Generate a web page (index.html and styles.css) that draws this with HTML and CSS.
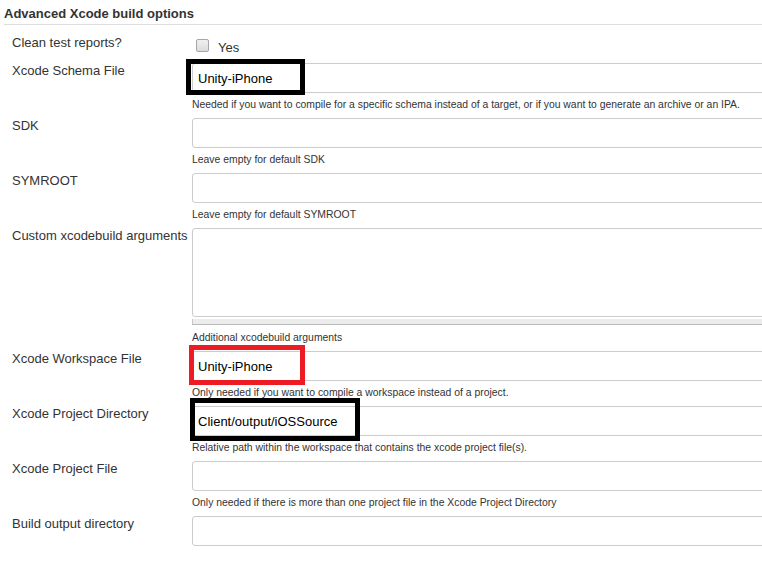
FILE: index.html
```html
<!DOCTYPE html>
<html>
<head>
<meta charset="utf-8">
<title>Advanced Xcode build options</title>
<link rel="stylesheet" href="styles.css">
</head>
<body>
<div class="section">
  <div class="section-header">Advanced Xcode build options</div>
  <div class="rows">
    <div class="row row-check">
      <div class="label">Clean test reports?</div>
      <div class="main check">
        <input type="checkbox" class="cb" id="clean">
        <label class="cb-label" for="clean">Yes</label>
      </div>
    </div>

    <div class="row">
      <div class="label">Xcode Schema File</div>
      <div class="main">
        <div class="field">
          <input class="text" type="text" value="Unity-iPhone">
          <span class="mark mark-black mark-schema"></span>
        </div>
        <div class="desc">Needed if you want to compile for a specific schema instead of a target, or if you want to generate an archive or an IPA.</div>
      </div>
    </div>

    <div class="row">
      <div class="label">SDK</div>
      <div class="main">
        <div class="field"><input class="text" type="text" value=""></div>
        <div class="desc">Leave empty for default SDK</div>
      </div>
    </div>

    <div class="row">
      <div class="label">SYMROOT</div>
      <div class="main">
        <div class="field"><input class="text" type="text" value=""></div>
        <div class="desc">Leave empty for default SYMROOT</div>
      </div>
    </div>

    <div class="row row-area">
      <div class="label">Custom xcodebuild arguments</div>
      <div class="main">
        <textarea class="area"></textarea>
        <div class="handle"></div>
        <div class="desc desc-area">Additional xcodebuild arguments</div>
      </div>
    </div>

    <div class="row">
      <div class="label">Xcode Workspace File</div>
      <div class="main">
        <div class="field">
          <input class="text" type="text" value="Unity-iPhone">
          <span class="mark mark-red mark-workspace"></span>
        </div>
        <div class="desc">Only needed if you want to compile a workspace instead of a project.</div>
      </div>
    </div>

    <div class="row">
      <div class="label">Xcode Project Directory</div>
      <div class="main">
        <div class="field">
          <input class="text" type="text" value="Client/output/iOSSource">
          <span class="mark mark-black mark-dir"></span>
        </div>
        <div class="desc">Relative path within the workspace that contains the xcode project file(s).</div>
      </div>
    </div>

    <div class="row">
      <div class="label">Xcode Project File</div>
      <div class="main">
        <div class="field"><input class="text" type="text" value=""></div>
        <div class="desc">Only needed if there is more than one project file in the Xcode Project Directory</div>
      </div>
    </div>

    <div class="row">
      <div class="label">Build output directory</div>
      <div class="main">
        <div class="field"><input class="text" type="text" value=""></div>
      </div>
    </div>
  </div>
</div>
</body>
</html>
```

FILE: styles.css
```css
html, body {
  margin: 0;
  padding: 0;
  overflow: hidden;
  background: #fff;
}

body {
  font-family: "Liberation Sans", Arial, sans-serif;
  font-size: 13px;
  color: #333;
}

.section {
  width: 840px;
}

.section-header {
  margin-left: 4px;
  padding: 6px 0 3px;
  line-height: 15px;
  font-weight: bold;
  color: #333;
  border-bottom: 1px solid #ddd;
}

.rows {
  padding-left: 12px;
}

.row {
  display: grid;
  grid-template-columns: 180px 1fr;
  height: 55px;
}

.row-check {
  height: 38px;
  padding-top: 10px;
  box-sizing: border-box;
}

.row-area {
  height: 123px;
}

.label {
  line-height: 15px;
  white-space: nowrap;
}

.check {
  display: flex;
  align-items: flex-start;
  padding-top: 4px;
}

.cb {
  appearance: none;
  -webkit-appearance: none;
  width: 13px;
  height: 13px;
  margin: 0 0 0 4px;
  box-sizing: border-box;
  border: 1px solid #a6a6a6;
  border-radius: 2px;
  background: linear-gradient(#f0f0f0, #dcdcdc);
}

.cb-label {
  margin: 1px 0 0 9px;
  line-height: 15px;
  font-size: 13px;
  color: #333;
}

.field {
  position: relative;
}

.text {
  display: block;
  width: 100%;
  height: 30px;
  box-sizing: border-box;
  margin: 0;
  padding: 0 5px;
  border: 1px solid #ccc;
  border-radius: 3px;
  background: #fff;
  font-family: "Liberation Sans", Arial, sans-serif;
  font-size: 13px;
  color: #000;
  outline: none;
}

.area {
  display: block;
  width: 100%;
  height: 89px;
  box-sizing: border-box;
  margin: 0;
  border: 1px solid #ccc;
  border-radius: 3px;
  resize: none;
  background: #fff;
  outline: none;
}

.handle {
  margin-top: 2px;
  height: 6px;
  box-sizing: border-box;
  background: #ececec;
  border-left: 1px solid #c8c8c8;
  border-bottom: 1px solid #bbb;
}

.desc {
  margin-top: 5px;
  font-size: 10.4px;
  line-height: 13px;
  color: #333;
  white-space: nowrap;
}

.desc-area {
  margin-top: 6px;
}

.mark {
  position: absolute;
  box-sizing: border-box;
  border: 5px solid #000;
  pointer-events: none;
}

.mark-black {
  border-color: #000;
}

.mark-red {
  border-color: #ed1c24;
}

.mark-schema {
  left: -6px;
  top: -4px;
  width: 119px;
  height: 36px;
}

.mark-workspace {
  left: -3px;
  top: -6px;
  width: 116px;
  height: 40px;
}

.mark-dir {
  left: -2px;
  top: -8px;
  width: 170px;
  height: 43px;
}
```
